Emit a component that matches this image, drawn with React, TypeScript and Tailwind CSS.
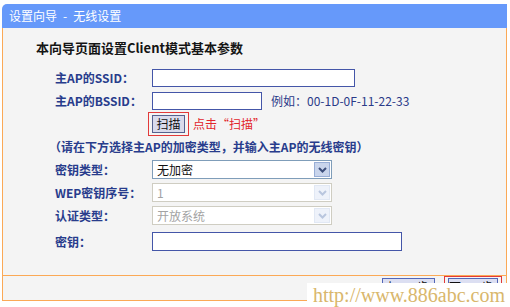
import type { ReactNode } from "react";

/* ── small pieces ───────────────────────────────────────────────── */

function Chevron({ muted }: { muted?: boolean }) {
  return (
    <svg width="9" height="6" viewBox="0 0 9 6" aria-hidden="true">
      <polyline
        points="1,1 4.5,4.5 8,1"
        fill="none"
        stroke={muted ? "#b9c6de" : "#3d4f7c"}
        strokeWidth="2"
      />
    </svg>
  );
}

function Label({ children }: { children: ReactNode }) {
  return (
    <span className="w-[97px] shrink-0 text-[12px] font-bold text-[#283c8c]">{children}</span>
  );
}

function Row({ children, className = "" }: { children: ReactNode; className?: string }) {
  return <div className={`flex items-center pl-[52px] ${className}`}>{children}</div>;
}

function TextBox({ width, height = "h-[18px]" }: { width: string; height?: string }) {
  return <div className={`${width} ${height} border border-[#4456a8] bg-white`} />;
}

interface SelectProps {
  value: string;
  disabled?: boolean;
}

function Select({ value, disabled = false }: SelectProps) {
  return (
    <div
      className={`flex h-[19px] w-[180px] items-stretch border bg-white p-[1px] ${
        disabled ? "border-[#cfcdc2]" : "border-[#7f9db9]"
      }`}
    >
      <span
        className={`flex flex-1 items-center pl-[3px] text-[12px] ${
          disabled ? "text-[#a3a3a3]" : "text-[#111]"
        }`}
      >
        {value}
      </span>
      <span
        className={`flex w-[16px] items-center justify-center border ${
          disabled ? "border-[#e1e8f4] bg-[#eef2fa]" : "border-[#98aed6] bg-[#c9d5ec]"
        }`}
      >
        <Chevron muted={disabled} />
      </span>
    </div>
  );
}

function FormButton({ children, width }: { children: ReactNode; width: string }) {
  return (
    <div
      className={`flex h-[20px] ${width} items-start justify-center border border-[#5366b8] bg-[#dcdff2] pt-[2px] text-[12px] tracking-[4px] text-[#111]`}
    >
      {children}
    </div>
  );
}

/* ── page ───────────────────────────────────────────────────────── */

export default function App() {
  return (
    <div className="relative h-[307px] w-[510px] overflow-hidden bg-white font-['Noto_Sans_CJK_SC','Noto_Sans',sans-serif] leading-none">
      <div className="ml-[2px] w-[505px] pt-[4px]">
        <div className="flex h-[24px] items-center rounded-tl-[5px] bg-[#6699fa] pl-[7px] text-[12px] text-white">
          设置向导<span className="mx-[6px]">-</span>无线设置
        </div>

        <div className="h-[248px] border-x border-b border-[#fba956] bg-[#f4f4f4] pt-[9px]">
          <div className="flex h-[20px] items-center pl-[33px] text-[13px] font-bold text-[#151515]">
            本向导页面设置Client模式基本参数
          </div>

          <Row className="mt-[10px] h-[22px]">
            <Label>主AP的SSID：</Label>
            <TextBox width="w-[203px]" />
          </Row>
          <Row className="h-[23px]">
            <Label>主AP的BSSID：</Label>
            <TextBox width="w-[110px]" />
            <span className="ml-[9px] text-[12px] text-[#2a3a88]">例如：00-1D-0F-11-22-33</span>
          </Row>
          <div className="flex h-[24px] items-center pl-[145px]">
            <div className="border border-[#e23a3a] px-[3px] py-[2px]">
              <div className="flex h-[18px] w-[33px] items-center justify-center border border-[#56628f] bg-[#d9dbec] text-[12px] text-[#111]">
                扫描
              </div>
            </div>
            <span className="ml-[4px] text-[12px] text-[#e2262c]">点击“扫描”</span>
          </div>
          <div className="flex h-[22px] items-center pl-[46px] text-[12px] font-bold text-[#283c8c]">
            （请在下方选择主AP的加密类型，并输入主AP的无线密钥）
          </div>

          <Row className="h-[23px]">
            <Label>密钥类型：</Label>
            <Select value="无加密" />
          </Row>
          <Row className="h-[23px]">
            <Label>WEP密钥序号：</Label>
            <Select value="1" disabled />
          </Row>
          <Row className="h-[23px]">
            <Label>认证类型：</Label>
            <Select value="开放系统" disabled />
          </Row>
          <Row className="mt-[3px] h-[23px]">
            <Label>密钥：</Label>
            <TextBox width="w-[250px]" height="h-[19px]" />
          </Row>
        </div>

        <div className="flex h-[25px] items-start justify-end gap-[9px] border-x border-b border-[#fba956] bg-[#f4f4f4] pr-[4px]">
          <div className="mt-[2px]">
            <FormButton width="w-[53px]">上一步</FormButton>
          </div>
          <div className="border border-[#e23a3a] px-[3px] py-[1px]">
            <FormButton width="w-[50px]">下一步</FormButton>
          </div>
        </div>
      </div>

      <div className="absolute left-[307px] top-[283px] flex h-[24px] w-[203px] items-center bg-white pl-[6px] font-['Liberation_Serif',serif] text-[20px] text-[#d9b76c]">
        http://www.886abc.com
      </div>
    </div>
  );
}
